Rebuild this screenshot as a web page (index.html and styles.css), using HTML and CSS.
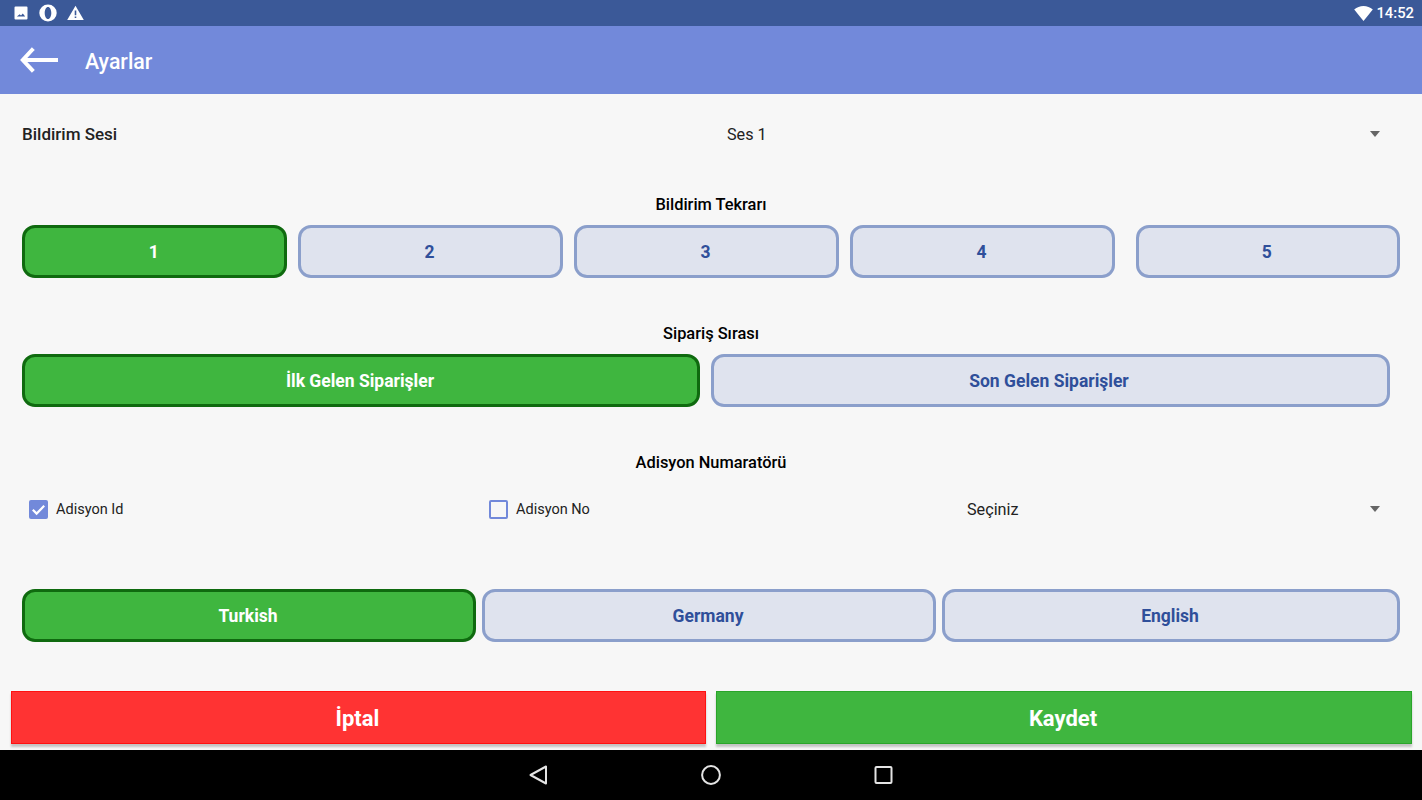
FILE: index.html
```html
<!DOCTYPE html>
<html lang="tr">
<head>
    <meta charset="UTF-8">
    <meta name="viewport" content="width=device-width, initial-scale=1.0">
    <title>Ayarlar</title>
    <link rel="stylesheet" href="styles.css">
</head>
<body>
    <div class="screen">
        <div class="status-bar">
            <div class="status-icons">
                <svg width="16" height="16" viewBox="0 0 16 16"><path fill="#fff" fill-rule="evenodd" d="M2.500 1.500h11a1 1 0 0 1 1 1v11a1 1 0 0 1-1 1h-11a1 1 0 0 1-1-1v-11a1 1 0 0 1 1-1zM3.800 11.600h8.400L9.800 8.400 8 10.600 6.700 9.200z"/></svg>
                <svg width="18" height="18" viewBox="0 0 18 18"><path fill="#fff" fill-rule="evenodd" d="M9 0.500a8.700 8.500 0 1 1 0 17A8.700 8.500 0 0 1 9 0.500zm0 2.500C7.100 3 5.700 5.700 5.700 9s1.400 6 3.300 6 3.300-2.700 3.300-6S10.900 3 9 3z"/></svg>
                <svg width="17" height="16" viewBox="0 0 17 16"><path fill="#fff" fill-rule="evenodd" d="M8.500 0.800 16.800 15H0.200zM7.700 5.500v4.800h1.600V5.500zM7.700 11.500v1.600h1.600v-1.600z"/></svg>
            </div>
            <div class="status-right">
                <svg class="wifi-icon" width="19" height="15" viewBox="0 0 19 15"><path fill="#fff" d="M9.500 15 0.200 3.500C3 1.300 6 0 9.500 0s6.500 1.300 9.300 3.500z"/></svg>
                <span class="clock">14:52</span>
            </div>
        </div>

        <div class="toolbar">
            <svg class="back-icon" width="40" height="28" viewBox="0 0 40 28"><path fill="none" stroke="#fff" stroke-width="4" stroke-linecap="square" d="M37 14H5M13 4 3.800 14 13 24"/></svg>
            <span class="toolbar-title">Ayarlar</span>
        </div>

        <div class="content">
            <div class="sound-row">
                <span class="field-label">Bildirim Sesi</span>
                <span class="spinner-value">Ses 1</span>
                <span class="spinner-arrow"></span>
            </div>

            <div class="section-title first">Bildirim Tekrarı</div>
            <div class="btn-row">
                <button class="opt-btn selected count-btn">1</button>
                <button class="opt-btn count-btn">2</button>
                <button class="opt-btn count-btn">3</button>
                <button class="opt-btn count-btn">4</button>
                <button class="opt-btn count-btn last">5</button>
            </div>

            <div class="section-title">Sipariş Sırası</div>
            <div class="btn-row">
                <button class="opt-btn selected order-btn">İlk Gelen Siparişler</button>
                <button class="opt-btn order-btn wide">Son Gelen Siparişler</button>
            </div>

            <div class="section-title">Adisyon Numaratörü</div>
            <div class="check-row">
                <label class="check-item id-check">
                    <span class="check-box checked">
                        <svg width="19" height="19" viewBox="0 0 19 19"><path fill="none" stroke="#fff" stroke-width="2.200" d="M3.800 9.800l3.800 3.800 7.600-7.800"/></svg>
                    </span>
                    Adisyon Id
                </label>
                <label class="check-item no-check">
                    <span class="check-box"></span>
                    Adisyon No
                </label>
                <span class="spinner-value">Seçiniz</span>
                <span class="spinner-arrow"></span>
            </div>

            <div class="btn-row lang-row">
                <button class="opt-btn selected lang-btn">Turkish</button>
                <button class="opt-btn lang-btn">Germany</button>
                <button class="opt-btn lang-btn wide">English</button>
            </div>
        </div>

        <div class="footer-buttons">
            <button class="footer-btn cancel">İptal</button>
            <button class="footer-btn save">Kaydet</button>
        </div>

        <div class="nav-bar">
            <svg width="20" height="20" viewBox="0 0 20 20"><path fill="none" stroke="#e4e4e4" stroke-width="2" stroke-linejoin="round" d="M17 1.500V18.500L1.500 10z"/></svg>
            <svg width="20" height="20" viewBox="0 0 20 20"><circle cx="10" cy="10" r="8.900" fill="none" stroke="#e4e4e4" stroke-width="2"/></svg>
            <svg width="20" height="20" viewBox="0 0 20 20"><rect x="2.500" y="2" width="16" height="16" rx="1" fill="none" stroke="#e4e4e4" stroke-width="2"/></svg>
        </div>
    </div>
</body>
</html>
```

FILE: styles.css
```css
* {
    box-sizing: border-box;
}

body {
    margin: 0;
    font-family: Roboto, "Liberation Sans", sans-serif;
    background-color: #f7f7f7;
}

.screen {
    width: 1422px;
    height: 800px;
    display: flex;
    flex-direction: column;
    overflow: hidden;
}

.status-bar {
    height: 26px;
    background: #3b5998;
    display: flex;
    align-items: center;
    justify-content: space-between;
    padding: 0 8px 0 13px;
}

.status-icons {
    display: flex;
    align-items: center;
    gap: 10px;
}

.status-right {
    display: flex;
    align-items: center;
    gap: 3px;
}

.wifi-icon {
    margin-top: 1px;
}

.clock {
    color: #fff;
    font-size: 14.8px;
    font-weight: 500;
}

.toolbar {
    height: 68px;
    background: #7289da;
    display: flex;
    align-items: center;
    padding-left: 19px;
}

.back-icon {
    margin-right: 26px;
}

.toolbar-title {
    padding-top: 2px;
    color: #fff;
    font-size: 21.3px;
    font-weight: 500;
}

.content {
    flex: 1;
    padding: 0 22px;
}

.sound-row {
    height: 80px;
    display: flex;
    align-items: center;
}

.field-label {
    width: 705px;
    font-size: 17px;
    font-weight: 500;
    color: #222;
}

.spinner-value {
    flex: 1;
    font-size: 16.2px;
    color: #222;
}

.spinner-arrow {
    width: 0;
    height: 0;
    margin-right: 20px;
    border-left: 5.500px solid transparent;
    border-right: 5.500px solid transparent;
    border-top: 6px solid #666;
}

.section-title {
    height: 20px;
    margin-top: 45px;
    margin-bottom: 11px;
    padding-top: 1px;
    line-height: 20px;
    text-align: center;
    font-size: 16.4px;
    font-weight: 500;
    color: #000;
}

.section-title.first {
    margin-top: 20px;
}

.btn-row {
    display: flex;
    gap: 10.500px;
}

.opt-btn {
    height: 53px;
    padding: 0 2px 0 0;
    border: 3px solid #8b9fcb;
    border-radius: 13px;
    background: #dfe3ee;
    color: #2f4f9a;
    font-family: inherit;
    font-size: 17.5px;
    font-weight: 700;
}

.opt-btn.selected {
    border-color: #0f6a0f;
    background: #3fb63f;
    color: #fff;
}

.count-btn {
    width: 265.500px;
}

.count-btn.last {
    width: 264.500px;
    margin-left: 10px;
}

.order-btn {
    width: 678px;
}

.order-btn.wide {
    width: 679px;
}

.check-row {
    height: 40px;
    margin-top: 17px;
    display: flex;
    align-items: center;
}

.check-item {
    display: flex;
    align-items: center;
    gap: 8px;
    font-size: 14.5px;
    color: #222;
}

.id-check {
    width: 460px;
    padding-left: 7px;
}

.no-check {
    width: 485px;
    padding-left: 7px;
}

.check-box {
    width: 19px;
    height: 19px;
    border: 2px solid #7289da;
    border-radius: 2px;
    display: flex;
}

.check-box.checked {
    border: 0;
    background: #7289da;
}

.lang-row {
    margin-top: 60px;
    gap: 6px;
}

.lang-btn {
    width: 454px;
}

.lang-btn.wide {
    width: 458px;
}

.footer-buttons {
    height: 59px;
    display: flex;
    gap: 10px;
    padding-left: 11px;
}

.footer-btn {
    width: 695px;
    height: 53px;
    padding: 1px 2px 0 0;
    color: #fff;
    font-family: inherit;
    font-size: 22px;
    font-weight: 700;
    box-shadow: 0 3px 2px #c4c4c4;
}

.cancel {
    background: #f33;
    border: 1px solid #f11;
}

.save {
    width: 696px;
    background: #3fb63f;
    border: 1px solid #2aa52a;
}

.nav-bar {
    height: 50px;
    background: #000;
    display: flex;
    align-items: center;
    justify-content: center;
    gap: 152px;
}
```
